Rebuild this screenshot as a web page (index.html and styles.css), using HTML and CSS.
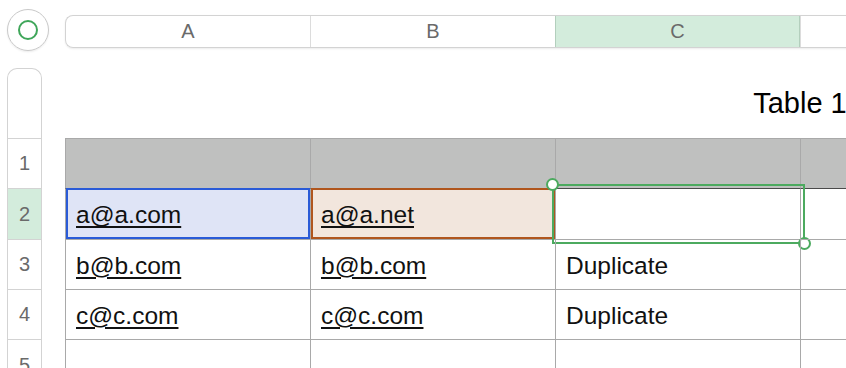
FILE: index.html
```html
<!DOCTYPE html>
<html lang="en">
<head>
<meta charset="UTF-8" />
<title>Table 1</title>
<link rel="stylesheet" href="styles.css">
</head>
<body>

<!-- Top bar: select-all button and column letters -->
<div class="topBar">
  <div class="selectAll"><span class="selectRing"></span></div>
  <div class="colHeads">
    <div class="colHead">A</div>
    <div class="colHead">B</div>
    <div class="colHead active">C</div>
    <div class="colHead"></div>
    <div class="colHead"></div>
    <div class="colHead"></div>
  </div>
</div>

<!-- Sheet: row numbers and the table -->
<div class="sheet">
  <div class="rowHeads">
    <div class="rowHead top"></div>
    <div class="rowHead">1</div>
    <div class="rowHead tall active">2</div>
    <div class="rowHead">3</div>
    <div class="rowHead">4</div>
    <div class="rowHead last">5</div>
  </div>

  <div class="table">
    <div class="tableTitle">Table 1</div>
    <div class="grid">
      <div class="cell head"></div>
      <div class="cell head"></div>
      <div class="cell head"></div>
      <div class="cell head"></div>
      <div class="cell head"></div>
      <div class="cell head"></div>

      <div class="cell tall mailA"><a href="#">a@a.com</a></div>
      <div class="cell tall mailB"><a href="#">a@a.net</a></div>
      <div class="cell tall picked">
        <span class="selBox"></span>
        <span class="handle handleTop"></span>
        <span class="handle handleBottom"></span>
      </div>
      <div class="cell tall"></div>
      <div class="cell tall"></div>
      <div class="cell tall"></div>

      <div class="cell"><a href="#">b@b.com</a></div>
      <div class="cell"><a href="#">b@b.com</a></div>
      <div class="cell">Duplicate</div>
      <div class="cell"></div>
      <div class="cell"></div>
      <div class="cell"></div>

      <div class="cell"><a href="#">c@c.com</a></div>
      <div class="cell"><a href="#">c@c.com</a></div>
      <div class="cell">Duplicate</div>
      <div class="cell"></div>
      <div class="cell"></div>
      <div class="cell"></div>

      <div class="cell"></div>
      <div class="cell"></div>
      <div class="cell"></div>
      <div class="cell"></div>
      <div class="cell"></div>
      <div class="cell"></div>
    </div>
  </div>
</div>

</body>
</html>
```

FILE: styles.css
```css
body {
  margin: 0;
  width: 846px;
  height: 368px;
  overflow: hidden;
  background: #fff;
  font-family: "Liberation Sans", Arial, sans-serif;
  color: #1d1d1f;
}

/* Top bar */
.topBar {
  display: flex;
  align-items: flex-start;
  gap: 16px;
  padding: 9px 0 0 7px;
}

.selectAll {
  box-sizing: border-box;
  width: 42px;
  height: 42px;
  flex: none;
  border: 1px solid #c9c9c9;
  border-radius: 50%;
  box-shadow: 0 1px 2px rgba(0,0,0,0.08);
  display: flex;
  align-items: center;
  justify-content: center;
}

.selectRing {
  box-sizing: border-box;
  width: 20px;
  height: 20px;
  border: 2.5px solid #3fa65a;
  border-radius: 50%;
}

.colHeads {
  display: flex;
  flex: none;
  margin-top: 6px;
  height: 33px;
  box-sizing: border-box;
  border: 1px solid #d3d3d3;
  border-right: none;
  border-radius: 8px 0 0 8px;
  box-shadow: 0 1px 2px rgba(0,0,0,0.08);
  overflow: hidden;
}

.colHead {
  box-sizing: border-box;
  width: 245px;
  flex: none;
  border-left: 1px solid #dcdcdc;
  display: flex;
  align-items: center;
  justify-content: center;
  font-size: 20px;
  color: #6a6a6a;
}

.colHead:first-child {
  width: 244px;
  border-left: none;
}

.colHead.active {
  background: #d3ecdc;
  border-left-color: #b3cfbd;
  border-right: 1px solid #b3cfbd;
}

/* Sheet */
.sheet {
  display: flex;
  align-items: flex-start;
  gap: 23px;
  margin-top: 17px;
  padding-left: 7px;
}

.rowHeads {
  box-sizing: border-box;
  width: 35px;
  flex: none;
  border: 1px solid #d3d3d3;
  border-bottom: none;
  border-radius: 10px 10px 0 0;
}

.rowHead {
  box-sizing: border-box;
  height: 50px;
  border-bottom: 1px solid #d3d3d3;
  display: flex;
  align-items: center;
  justify-content: center;
  font-size: 20px;
  color: #6a6a6a;
}

.rowHead.top {
  height: 70px;
}

.rowHead.tall {
  height: 51px;
}

.rowHead.active {
  background: #d3ecdc;
}

.rowHead.last {
  border-bottom: none;
}

/* Table */
.table {
  width: 1470px;
  flex: none;
}

.tableTitle {
  box-sizing: border-box;
  height: 70px;
  padding-top: 19px;
  text-align: center;
  font-size: 29px;
  color: #000;
}

.grid {
  display: grid;
  grid-template-columns: repeat(6, 245px);
}

.cell {
  position: relative;
  box-sizing: border-box;
  height: 50px;
  border-left: 1px solid #a9a9a9;
  border-bottom: 1px solid #a9a9a9;
  display: flex;
  align-items: center;
  padding: 2px 0 0 10px;
  font-size: 24.5px;
  color: #111;
}

.cell a {
  color: #111;
  text-decoration: underline;
  text-decoration-thickness: 1.5px;
  text-underline-offset: 3px;
}

.cell.head {
  height: 51px;
  background: #bfc0bf;
  border-top: 1px solid #a9a9a9;
  border-bottom-color: #4a4a4a;
}

.cell.tall {
  height: 51px;
}

.mailA {
  background: #dfe4f6;
}

.mailB {
  background: #f2e6dd;
}

.mailA::after,
.mailB::after {
  content: "";
  position: absolute;
  top: -1px;
  left: 0;
  right: 0;
  bottom: 0;
  border: 2px solid #2a5bd7;
}

.mailB::after {
  border-color: #b0561d;
}

/* Selected cell */
.selBox {
  position: absolute;
  top: -5px;
  left: -4px;
  right: -5px;
  bottom: -5px;
  border: 2px solid #4caa5f;
}

.handle {
  position: absolute;
  box-sizing: border-box;
  width: 13px;
  height: 13px;
  background: #fff;
  border: 2px solid #4caa5f;
  border-radius: 50%;
}

.handleTop {
  top: -11px;
  left: -10px;
}

.handleBottom {
  bottom: -11px;
  right: -11px;
}
```
